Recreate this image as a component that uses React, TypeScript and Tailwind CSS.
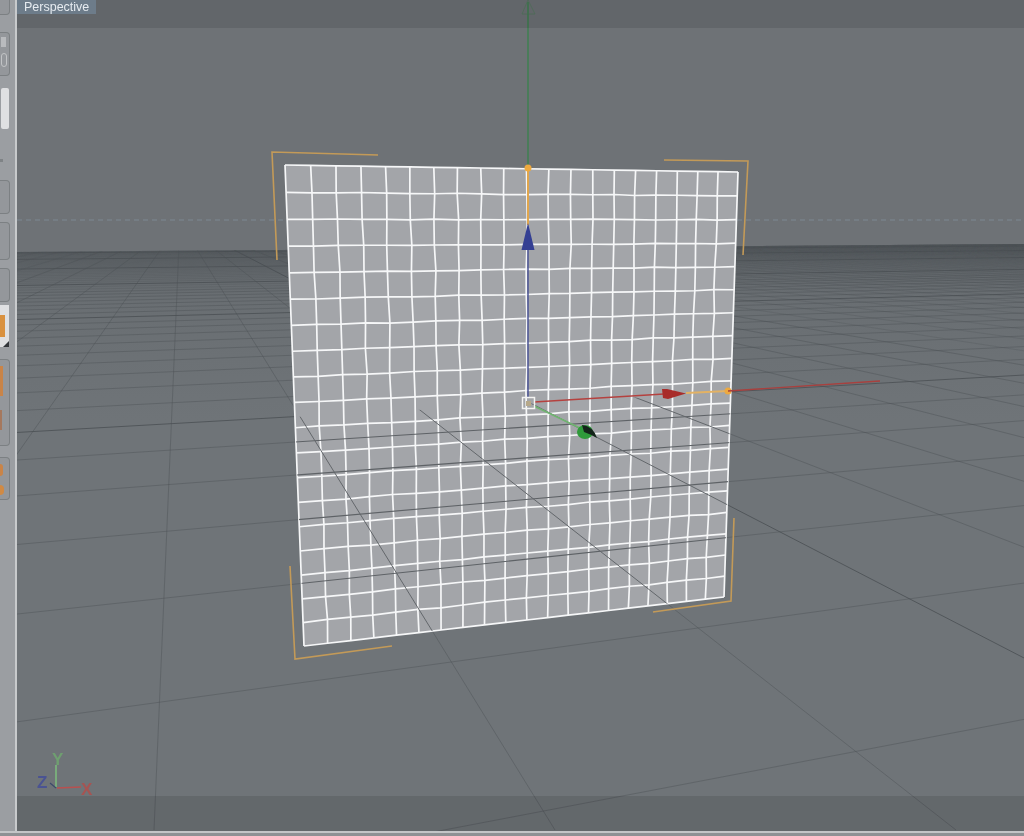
import React from 'react';

type Pt = [number, number];

// plane corners, measured off the viewport
const quad: Pt[] = [[285, 165], [738, 172], [724, 597], [304, 646]];
const ROWS = 19;
const COLS = 20;

// unit square -> quad, so the wire cells get the same foreshortening
const homography = (q: Pt[]) => {
  const [[x0, y0], [x1, y1], [x2, y2], [x3, y3]] = q;
  const dx1 = x1 - x2, dx2 = x3 - x2, sx = x0 - x1 + x2 - x3;
  const dy1 = y1 - y2, dy2 = y3 - y2, sy = y0 - y1 + y2 - y3;
  const den = dx1 * dy2 - dx2 * dy1;
  const g = (sx * dy2 - dx2 * sy) / den;
  const h = (dx1 * sy - sx * dy1) / den;
  return (u: number, v: number): Pt => {
    const w = g * u + h * v + 1;
    return [
      (x1 - x0 + g * x1) * u / w + (x3 - x0 + h * x3) * v / w + x0 / w,
      (y1 - y0 + g * y1) * u / w + (y3 - y0 + h * y3) * v / w + y0 / w,
    ];
  };
};

const noise = (a: number, b: number) => {
  const s = Math.sin(a * 12.9898 + b * 78.233) * 43758.5453;
  return s - Math.floor(s) - 0.5;
};

const mapPlane = homography(quad);
const verts: Pt[][] = [];
for (let r = 0; r <= ROWS; r++) {
  const row: Pt[] = [];
  for (let c = 0; c <= COLS; c++) {
    const [x, y] = mapPlane(c / COLS, r / ROWS);
    const edge = r === 0 || r === ROWS || c === 0 || c === COLS;
    row.push([x + (edge ? 0 : noise(r, c) * 1.5), y + (edge ? 0 : noise(c + 40, r) * 1)]);
  }
  verts.push(row);
}
const wirePaths: string[] = [];
verts.forEach((row) => wirePaths.push(row.map((p) => p.join(',')).join(' ')));
for (let c = 0; c <= COLS; c++) {
  wirePaths.push(verts.map((row) => row[c].join(',')).join(' '));
}

// floor grid: two vanishing points on the horizon
const VPA: Pt = [3600, 228];
const VPB: Pt = [180, 222];
const crossLine = (k: number) => {
  const y16 = 222 + 1 / (0.002 + 0.00055 * k);
  const slope = (y16 - VPA[1]) / (VPA[0] - 16);
  return { x1: 16, y1: y16, x2: 1030, y2: y16 - slope * 1014 };
};
const depthLine = (j: number) => {
  const x830 = 154 + 401 * j;
  return { x1: VPB[0], y1: VPB[1], x2: x830, y2: 830 };
};
const kRange = Array.from({ length: 66 }, (_, i) => i - 2);
const jRange = Array.from({ length: 110 }, (_, i) => i - 50);

const floorStroke = (major: boolean, far: boolean) => {
  if (major) return { stroke: '#484d51', strokeWidth: 1, opacity: 0.75 };
  return { stroke: '#4d5256', strokeWidth: 0.8, opacity: far ? 0.32 : 0.55 };
};

const Viewport3D: React.FC = () => (
  <svg className="absolute inset-0 h-full w-full" viewBox="17 0 1007 831">
    <defs>
      <clipPath id="floor">
        <polygon points="16,252 1024,244 1024,831 16,831" />
      </clipPath>
      <clipPath id="front">
        <polygon points="295,417 731,392 724,597 304,646" />
      </clipPath>
      <linearGradient id="floorFill" x1="0" y1="244" x2="0" y2="420" gradientUnits="userSpaceOnUse">
        <stop offset="0" stopColor="#5c6165" />
        <stop offset="0.3" stopColor="#696e72" />
        <stop offset="1" stopColor="#6f7478" />
      </linearGradient>
    </defs>

    <line x1="17" y1="220" x2="1022" y2="220" stroke="#82939f" strokeWidth="1" strokeDasharray="5 4" opacity="0.7" />

    {/* floor */}
    <polygon points="16,252 1024,244 1024,831 16,831" fill="url(#floorFill)" />
    <g clipPath="url(#floor)">
      {kRange.map((k) => (
        <line key={k} {...crossLine(k)} {...floorStroke(((k % 10) + 10) % 10 === 5, k > 22)} />
      ))}
      {jRange.map((j) => (
        <line key={j} {...depthLine(j)} {...floorStroke(j === 3, j < -4 || j > 9)} />
      ))}
    </g>

    {/* plane */}
    <polygon points={quad.map((p) => p.join(',')).join(' ')} fill="#a3a5a9" />
    <g fill="none" stroke="#f6f7f8" strokeWidth="1.7">
      {wirePaths.map((d, i) => (
        <polyline key={i} points={d} />
      ))}
    </g>

    {/* floor lines in front of the plane */}
    <g clipPath="url(#front)">
      {[-1, 0, 1, 2, 3, 4].map((k) => (
        <line key={k} {...crossLine(k)} stroke="#5e6266" strokeWidth="1.1" />
      ))}
      {[0, 1, 2, 3, 4, 5].map((j) => (
        <line key={j} {...depthLine(j)} stroke="#63676b" strokeWidth="1" />
      ))}
    </g>

    {/* bounding corners */}
    <g fill="none" stroke="#c39a58" strokeWidth="1.6">
      <polyline points="277,260 272,152 378,155" />
      <polyline points="664,160 748,161 743,255" />
      <polyline points="653,612 731,601 734,518" />
      <polyline points="290,566 295,659 392,646" />
    </g>

    {/* move gizmo */}
    <line x1="528" y1="168" x2="528" y2="2" stroke="#3f8052" strokeWidth="1.5" />
    <path d="M528 0 L522 14 M528 0 L535 14 M522 14 L535 14" fill="none" stroke="#4f7a5c" strokeWidth="1" opacity="0.6" />
    <line x1="528" y1="168" x2="528" y2="225" stroke="#e0a64e" strokeWidth="2" />
    <circle cx="528" cy="168" r="3.5" fill="#eda93f" />
    <line x1="528" y1="248" x2="528" y2="398" stroke="#4b5596" strokeWidth="1.5" />
    <path d="M528 223 L534.5 250 L521.5 250 Z" fill="#343f93" />
    <line x1="534" y1="402" x2="664" y2="394" stroke="#b5413f" strokeWidth="1.5" />
    <path d="M662 389 L667 389 L686 393.5 L668 399 L663 398 Z" fill="#a82c2a" />
    <line x1="686" y1="393" x2="728" y2="391" stroke="#e3b264" strokeWidth="2.2" />
    <circle cx="728" cy="391" r="3.5" fill="#eda93f" />
    <line x1="728" y1="391" x2="880" y2="381" stroke="#a8403e" strokeWidth="1.4" />
    <line x1="534" y1="406" x2="582" y2="429" stroke="#6fb56f" strokeWidth="1.5" />
    <ellipse cx="585" cy="432" rx="8" ry="7" fill="#2f9a3a" />
    <path d="M582 425 Q593 426 597 438 Q590 434 584 432 Z" fill="#14241a" />
    <rect x="522.5" y="397.5" width="12" height="11" fill="none" stroke="#f4f4f2" strokeWidth="1.5" />
    <rect x="526" y="401" width="5" height="5" fill="#b7a98a" />

    {/* world axis */}
    <line x1="56" y1="765" x2="56" y2="787" stroke="#79ab7b" strokeWidth="2" />
    <line x1="50" y1="783" x2="56" y2="788" stroke="#3c4a6a" strokeWidth="1.2" />
    <line x1="57" y1="788" x2="81" y2="787" stroke="#b8504f" strokeWidth="1.5" />
    <g className="font-['Liberation_Sans',sans-serif] text-[17px] font-bold">
      <text x="52" y="765" fill="#6f9f70">Y</text>
      <text x="37" y="788" fill="#4a5392">Z</text>
      <text x="81" y="795" fill="#a65452">X</text>
    </g>
  </svg>
);

const ToolGroup: React.FC<{ className: string; children?: React.ReactNode }> = ({ className, children }) => (
  <div className={`relative w-[10px] overflow-hidden rounded-r-[4px] border-y border-r border-[#7c8083] bg-[#94979b] ${className}`}>
    {children}
  </div>
);

const App: React.FC = () => {
  return (
    <div className="flex h-[836px] w-[1024px] flex-col overflow-hidden bg-[#9b9ea2] blur-[0.5px]">
      <div className="flex min-h-0 flex-1">
        {/* Left toolbar, cut off by the crop */}
        <div className="flex w-[15px] shrink-0 flex-col bg-[#9b9ea2]">
          <ToolGroup className="mt-[-4px] h-[19px]" />
          <ToolGroup className="mt-[17px] h-[44px]">
            <div className="ml-[1px] mt-[4px] h-[10px] w-[5px] bg-[#b9bbbe]" />
            <div className="ml-[1px] mt-[6px] h-[14px] w-[6px] rounded-full border border-[#c2c4c6]" />
          </ToolGroup>
          <div className="ml-[1px] mt-[12px] h-[41px] w-[8px] rounded-[2px] bg-[#dfe0e2]" />
          <div className="mt-[30px] h-[3px] w-[3px] bg-[#7f8386]" />
          <ToolGroup className="mt-[18px] h-[34px]" />
          <ToolGroup className="mt-[8px] h-[38px]" />
          <ToolGroup className="mt-[8px] h-[34px]" />
          <div className="relative mt-[3px] h-[42px] w-[9px] bg-[#dfe0e2]">
            <div className="absolute left-0 top-[10px] h-[22px] w-[5px] bg-[#d9913f]" />
            <div className="absolute bottom-0 right-0 size-0 border-b-[6px] border-l-[6px] border-b-[#33363a] border-l-transparent" />
          </div>
          <ToolGroup className="mt-[12px] h-[87px]">
            <div className="mt-[6px] h-[30px] w-[3px] bg-[#c98448]" />
            <div className="mt-[14px] h-[20px] w-[2px] bg-[#a5785e]" />
          </ToolGroup>
          <ToolGroup className="mt-[11px] h-[43px]">
            <div className="mt-[6px] h-[12px] w-[3px] rounded-r-full bg-[#c98448]" />
            <div className="mt-[9px] h-[10px] w-[4px] rounded-r-full bg-[#d08a45]" />
          </ToolGroup>
        </div>

        {/* Viewport */}
        <div className="relative flex min-w-0 flex-1 flex-col justify-between overflow-hidden border-l-2 border-[#c8cacc] bg-[#6e7276]">
          <Viewport3D />
          <div className="relative h-[28px] bg-black/10">
            <div className="h-[14px] w-[79px] bg-[#6d7c8a] pl-[7px] text-[12.5px] leading-[14px] text-[#e6ebf0] font-['Liberation_Sans',sans-serif]">
              Perspective
            </div>
          </div>
          <div className="relative h-[35px] bg-black/10" />
        </div>
      </div>
      <div className="h-[5px] shrink-0 border-t-2 border-[#c3c5c7] bg-[#8e9194]" />
    </div>
  );
};

export default App;
